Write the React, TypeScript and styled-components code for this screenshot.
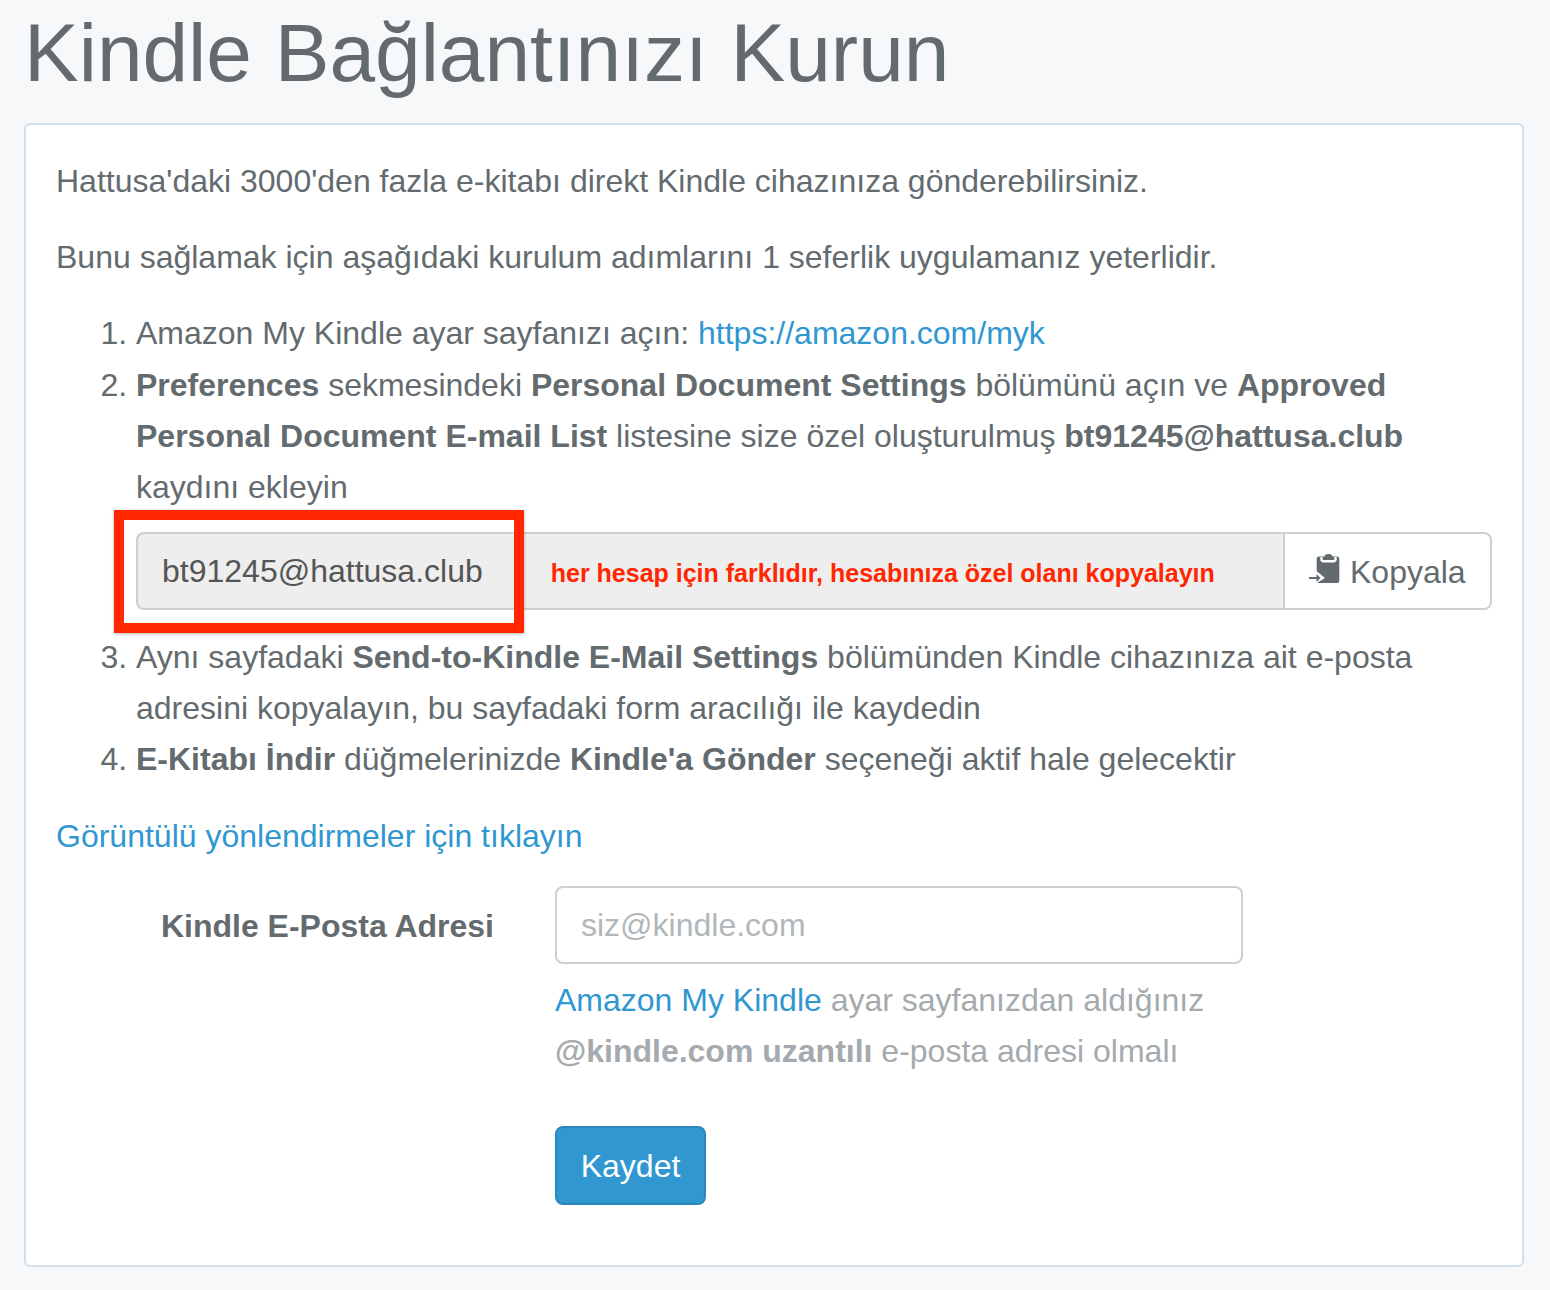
import React from "react";
import styled, { createGlobalStyle } from "styled-components";

const GlobalStyle = createGlobalStyle`
    html, body {
        margin: 0;
        padding: 0;
        background: #f6f8fa;
    }
    body {
        font-family: "Liberation Sans", Arial, sans-serif;
        font-size: 32px;
        line-height: 51.2px;
        color: #636b6f;
    }
`;

const Page = styled.div`
    width: 1550px;
    height: 1290px;
    overflow: hidden;
    padding: 0 26px 0 24px;
    box-sizing: border-box;
`;

const Title = styled.h1`
    margin: 0;
    height: 123px;
    font-size: 82px;
    line-height: 105px;
    font-weight: 400;
    color: #636b6f;
`;

const Card = styled.div`
    box-sizing: border-box;
    height: 1144px;
    background: #fff;
    border: 2px solid #d3e0e9;
    border-radius: 6px;
    padding: 31px 30px;
`;

const Paragraph = styled.p`
    margin: 0 0 25px;
`;

const Link = styled.a`
    color: #3097d1;
    text-decoration: none;
`;

const Steps = styled.ol`
    margin: 0 0 25.5px;
    padding: 0 0 0 80px;
`;

const CopyRow = styled.div`
    position: relative;
    display: flex;
    height: 78px;
    margin: 19px 0 21.5px;
    width: 1356px;
`;

const CopyField = styled.div`
    flex: 1;
    display: flex;
    align-items: center;
    box-sizing: border-box;
    padding: 0 24px;
    background: #eeeeee;
    border: 2px solid #ccd0d2;
    border-right: 0;
    border-radius: 8px 0 0 8px;
    color: #555;
`;

const CopyNote = styled.span`
    margin: 4px 0 0 68px;
    font-size: 25px;
    font-weight: 700;
    color: #ff2600;
`;

const CopyButton = styled.button`
    display: flex;
    align-items: center;
    gap: 10px;
    box-sizing: border-box;
    width: 209px;
    padding: 2px 0 0 24px;
    background: #fff;
    border: 2px solid #ccd0d2;
    border-radius: 0 8px 8px 0;
    font: inherit;
    color: #636b6f;
`;

const IconSvg = styled.svg`
    overflow: visible;
    flex: none;
`;

const Highlight = styled.div`
    position: absolute;
    left: -22px;
    top: -22px;
    width: 410px;
    height: 123px;
    box-sizing: border-box;
    border: 10px solid #ff2600;
    box-shadow: 0 1px 3px rgba(0, 0, 0, 0.3);
`;

const FormRow = styled.div`
    display: grid;
    grid-template-columns: 438px 688px;
    column-gap: 61px;
    margin-top: 24px;
`;

const FieldLabel = styled.label`
    padding-top: 15px;
    font-weight: 700;
    text-align: right;
`;

const FieldColumn = styled.div`
    display: flex;
    flex-direction: column;
    align-items: flex-start;
`;

const TextInput = styled.div`
    box-sizing: border-box;
    width: 688px;
    height: 78px;
    padding: 2px 24px 0;
    display: flex;
    align-items: center;
    border: 2px solid #ccd0d2;
    border-radius: 8px;
    color: #b1b7ba;
`;

const HelpText = styled.div`
    margin-top: 11px;
    color: #a4aaae;
    white-space: nowrap;
`;

const SaveButton = styled.button`
    margin-top: 49px;
    width: 151px;
    height: 79px;
    padding: 2px 0 0;
    background: #3097d1;
    border: 2px solid #2a88bd;
    border-radius: 8px;
    color: #fff;
    font: inherit;
`;

const ClipboardIcon = () => (
    <IconSvg width="31" height="31" viewBox="0 3 31 31" aria-hidden="true">
        <path
            fill="#636b6f"
            d="M10 2.500h5.500a4 2.500 0 0 1 8 0H28a2.300 2.300 0 0 1 2.300 2.300V27a2 2 0 0 1-2 2H8l8-5-8.300-6.700V4.800A2.300 2.300 0 0 1 10 2.500z"
        />
        <path fill="none" stroke="#fff" strokeWidth="2.400" d="M12.500 3v2.500a1.800 1.800 0 0 0 1.800 1.800h10.400a1.800 1.800 0 0 0 1.800-1.800V3" />
        <path fill="#636b6f" d="M0 23h7.500v-3l4 4-4 4v-3H0z" />
    </IconSvg>
);

const App: React.FC = () => {
    return (
        <Page>
            <GlobalStyle />
            <Title>Kindle Bağlantınızı Kurun</Title>
            <Card>
                <Paragraph>Hattusa'daki 3000'den fazla e-kitabı direkt Kindle cihazınıza gönderebilirsiniz.</Paragraph>
                <Paragraph>Bunu sağlamak için aşağıdaki kurulum adımlarını 1 seferlik uygulamanız yeterlidir.</Paragraph>
                <Steps>
                    <li>
                        Amazon My Kindle ayar sayfanızı açın: <Link href="#">https://amazon.com/myk</Link>
                    </li>
                    <li>
                        <b>Preferences</b> sekmesindeki <b>Personal Document Settings</b> bölümünü açın ve{" "}
                        <b>Approved Personal Document E-mail List</b> listesine size özel oluşturulmuş{" "}
                        <b>bt91245@hattusa.club</b> kaydını ekleyin
                        <CopyRow>
                            <CopyField>
                                bt91245@hattusa.club
                                <CopyNote>her hesap için farklıdır, hesabınıza özel olanı kopyalayın</CopyNote>
                            </CopyField>
                            <CopyButton>
                                <ClipboardIcon />
                                Kopyala
                            </CopyButton>
                            <Highlight />
                        </CopyRow>
                    </li>
                    <li>
                        Aynı sayfadaki <b>Send-to-Kindle E-Mail Settings</b> bölümünden Kindle cihazınıza ait e-posta
                        adresini kopyalayın, bu sayfadaki form aracılığı ile kaydedin
                    </li>
                    <li>
                        <b>E-Kitabı İndir</b> düğmelerinizde <b>Kindle'a Gönder</b> seçeneği aktif hale gelecektir
                    </li>
                </Steps>
                <Link href="#">Görüntülü yönlendirmeler için tıklayın</Link>
                <FormRow>
                    <FieldLabel>Kindle E-Posta Adresi</FieldLabel>
                    <FieldColumn>
                        <TextInput>siz@kindle.com</TextInput>
                        <HelpText>
                            <Link href="#">Amazon My Kindle</Link> ayar sayfanızdan aldığınız
                            <br />
                            <b>@kindle.com uzantılı</b> e-posta adresi olmalı
                        </HelpText>
                        <SaveButton>Kaydet</SaveButton>
                    </FieldColumn>
                </FormRow>
            </Card>
        </Page>
    );
};

export default App;
